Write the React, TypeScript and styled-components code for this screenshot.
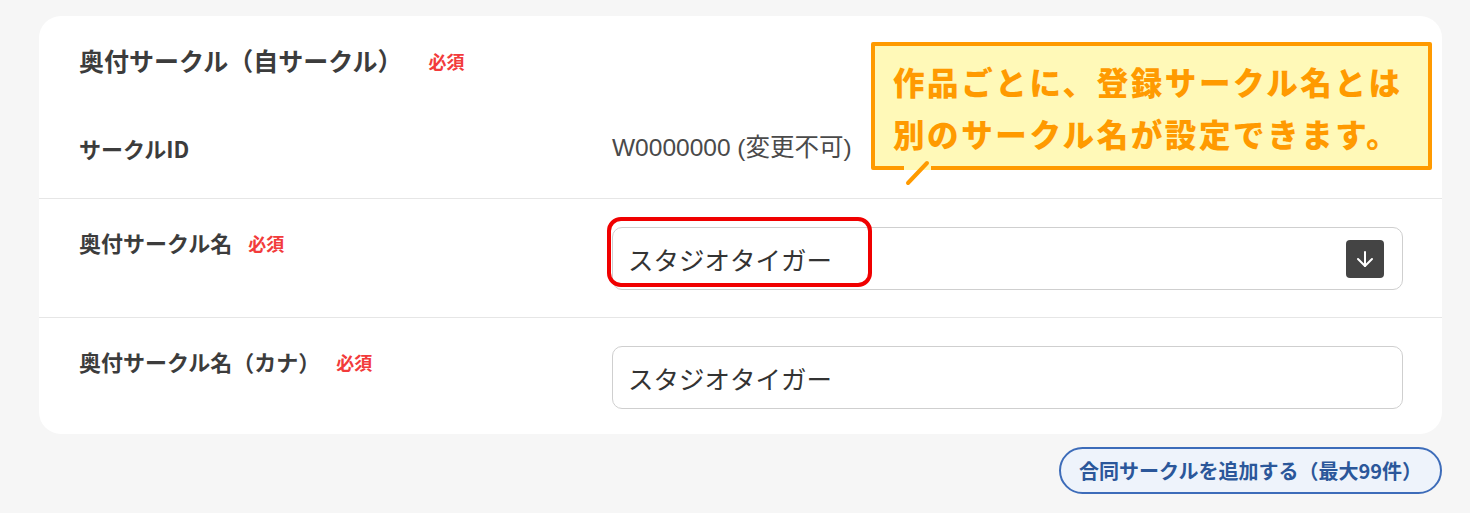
import React from 'react';
import styled, { createGlobalStyle } from 'styled-components';
import { ArrowDown } from 'lucide-react';

const GlobalStyle = createGlobalStyle`
  html, body {
    margin: 0;
    padding: 0;
    background-color: #f6f6f6;
    font-family: "Noto Sans CJK JP", "Noto Sans", sans-serif;
    color: #3c3c3c;
  }
`;

const Page = styled.div`
  position: relative;
  width: 1470px;
  height: 513px;
  padding: 16px 28px 0 39px;
  box-sizing: border-box;
  display: flex;
  flex-direction: column;
  align-items: flex-end;
  gap: 13px;
`;

const Card = styled.div`
  width: 1403px;
  background-color: #fff;
  border-radius: 22px;
  box-sizing: border-box;
  display: flex;
  flex-direction: column;
`;

const Header = styled.div`
  padding: 26px 39px 0 40px;
  display: flex;
  align-items: flex-start;
  gap: 26px;
  height: 89px;
  box-sizing: border-box;

  h2 {
    margin: 0;
    font-size: 25px;
    line-height: 36px;
    font-weight: 700;
    color: #3c3c3c;
  }
`;

const Row = styled.div<{ $divider?: boolean; $height: number }>`
  display: grid;
  grid-template-columns: 533px 1fr;
  padding: 28px 39px 0 40px;
  height: ${(p) => p.$height}px;
  box-sizing: border-box;
  border-top: ${(p) => (p.$divider ? '1px solid #e6e6e6' : 'none')};
`;

const Label = styled.div`
  display: flex;
  align-items: center;
  gap: 16px;
  height: 30px;
  font-size: 22px;
  font-weight: 700;
  color: #3c3c3c;
`;

const Required = styled.span<{ $top?: boolean }>`
  font-size: 18px;
  font-weight: 700;
  color: #f23b3b;
  margin-top: ${(p) => (p.$top ? '6px' : '2px')};
`;

const Value = styled.div`
  font-family: "Liberation Sans", "Noto Sans CJK JP", sans-serif;
  font-size: 24.5px;
  line-height: 34px;
  color: #4a4a4a;
  margin-top: -2px;
`;

const InputBox = styled.div`
  position: relative;
  height: 63px;
  border: 1px solid #cfcfcf;
  border-radius: 10px;
  box-sizing: border-box;
  display: flex;
  align-items: center;
  justify-content: space-between;
  padding: 0 18px 0 15px;
  font-size: 25.5px;
  color: #333;
`;

const DropButton = styled.div`
  width: 38px;
  height: 38px;
  border-radius: 4px;
  background-color: #444;
  color: #fff;
  display: flex;
  align-items: center;
  justify-content: center;
`;

const Highlight = styled.div`
  position: absolute;
  left: -6px;
  top: -11px;
  width: 265px;
  height: 70px;
  border: 4px solid #f00000;
  border-radius: 14px;
  box-sizing: border-box;
`;

const AddButton = styled.button`
  all: unset;
  width: 383px;
  height: 47px;
  box-sizing: border-box;
  border: 2px solid #3d6cb9;
  border-radius: 24px;
  background-color: #eef3fb;
  color: #2b579a;
  font-family: "Noto Sans CJK JP", sans-serif;
  font-size: 20px;
  font-weight: 700;
  display: flex;
  align-items: center;
  justify-content: center;
  cursor: pointer;
`;

const Callout = styled.div`
  position: absolute;
  left: 871px;
  top: 42px;
  width: 561px;
  height: 128px;
  box-sizing: border-box;
  border: 4px solid #ff9a00;
  border-radius: 2px;
  background-color: #fff9b8;
  padding: 9px 0 0 18px;
  color: #ff9a00;
  font-size: 31.5px;
  font-weight: 900;
  line-height: 52px;
  letter-spacing: 2.6px;
  white-space: nowrap;
`;

const Tail = styled.svg`
  position: absolute;
  left: 896px;
  top: 158px;
`;

export default function App() {
  return (
    <>
      <GlobalStyle />
      <Page>
        <Card>
          <Header>
            <h2>奥付サークル（自サークル）</h2>
            <Required $top>必須</Required>
          </Header>
          <Row $height={93}>
            <Label>サークルID</Label>
            <Value>W0000000 (変更不可)</Value>
          </Row>
          <Row $divider $height={119}>
            <Label>
              奥付サークル名<Required>必須</Required>
            </Label>
            <InputBox>
              スタジオタイガー
              <DropButton>
                <ArrowDown size={24} strokeWidth={2} />
              </DropButton>
              <Highlight />
            </InputBox>
          </Row>
          <Row $divider $height={117}>
            <Label>
              奥付サークル名（カナ）<Required>必須</Required>
            </Label>
            <InputBox>スタジオタイガー</InputBox>
          </Row>
        </Card>
        <AddButton>合同サークルを追加する（最大99件）</AddButton>
        <Callout>
          作品ごとに、登録サークル名とは
          <br />
          別のサークル名が設定できます。
        </Callout>
        <Tail width="40" height="30" viewBox="0 0 40 30">
          <rect x="8" y="6" width="27" height="6" fill="#fff9b8" />
          <line x1="31" y1="5" x2="12" y2="25" stroke="#ff9a00" strokeWidth="4" strokeLinecap="round" />
        </Tail>
      </Page>
    </>
  );
}
